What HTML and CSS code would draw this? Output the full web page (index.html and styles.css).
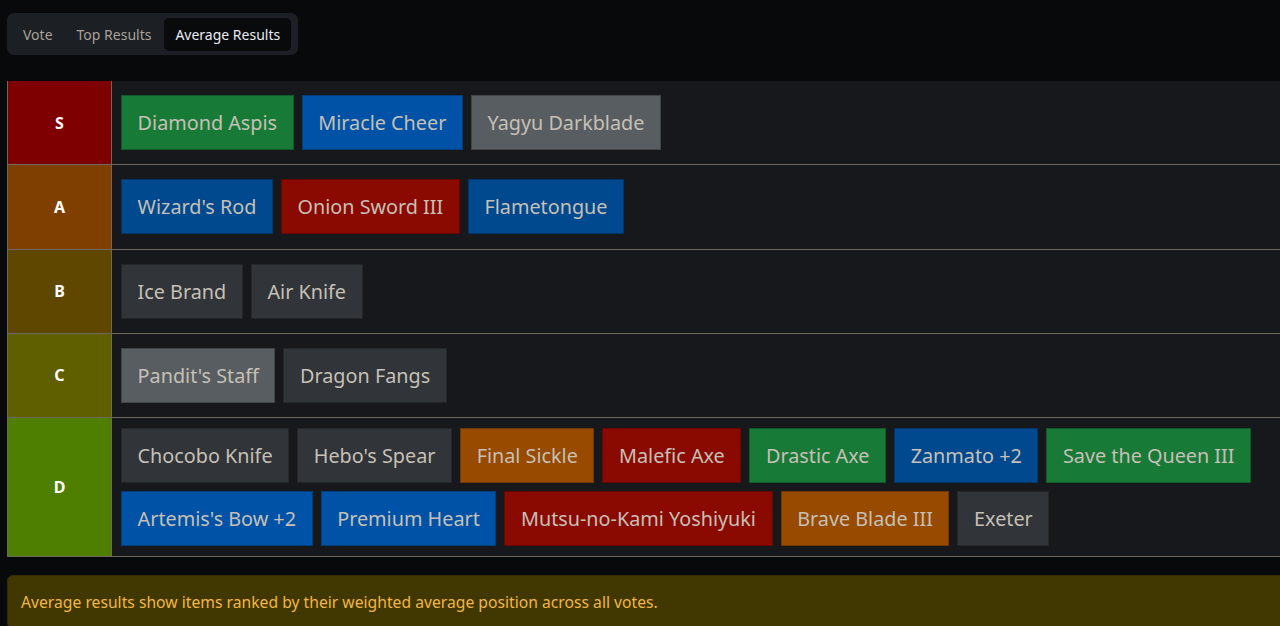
FILE: index.html
```html
<!DOCTYPE html>
<html lang="en">
<head>
    <meta charset="UTF-8">
    <meta name="viewport" content="width=device-width, initial-scale=1.0">
    <title>Tier List Results</title>
    <link rel="stylesheet" href="styles.css">
</head>
<body>
    <div class="tabs">
        <button class="tab">Vote</button>
        <button class="tab">Top Results</button>
        <button class="tab active">Average Results</button>
    </div>

    <div class="tier-list">
        <div class="tier">
            <div class="tier-label tier-s">S</div>
            <div class="tier-items">
                <div class="item green">Diamond Aspis</div>
                <div class="item blue">Miracle Cheer</div>
                <div class="item gray">Yagyu Darkblade</div>
            </div>
        </div>
        <div class="tier">
            <div class="tier-label tier-a">A</div>
            <div class="tier-items">
                <div class="item navy">Wizard's Rod</div>
                <div class="item red">Onion Sword III</div>
                <div class="item navy">Flametongue</div>
            </div>
        </div>
        <div class="tier">
            <div class="tier-label tier-b">B</div>
            <div class="tier-items">
                <div class="item dark">Ice Brand</div>
                <div class="item dark">Air Knife</div>
            </div>
        </div>
        <div class="tier">
            <div class="tier-label tier-c">C</div>
            <div class="tier-items">
                <div class="item gray">Pandit's Staff</div>
                <div class="item dark">Dragon Fangs</div>
            </div>
        </div>
        <div class="tier">
            <div class="tier-label tier-d">D</div>
            <div class="tier-items">
                <div class="item dark">Chocobo Knife</div>
                <div class="item dark">Hebo's Spear</div>
                <div class="item orange">Final Sickle</div>
                <div class="item red">Malefic Axe</div>
                <div class="item green">Drastic Axe</div>
                <div class="item navy">Zanmato +2</div>
                <div class="item green">Save the Queen III</div>
                <div class="item blue">Artemis's Bow +2</div>
                <div class="item blue">Premium Heart</div>
                <div class="item red">Mutsu-no-Kami Yoshiyuki</div>
                <div class="item orange">Brave Blade III</div>
                <div class="item dark">Exeter</div>
            </div>
        </div>
    </div>

    <div class="notice">
        Average results show items ranked by their weighted average position across all votes.
    </div>
</body>
</html>
```

FILE: styles.css
```css
body {
    font-family: "Noto Sans", "Open Sans", sans-serif;
    background-color: #08090b;
    color: #c9c3b9;
    margin: 0;
    padding: 13px 0 0 7px;
    overflow: hidden;
}
.tabs {
    display: inline-flex;
    gap: 2px;
    padding: 5px 7px 4px 5px;
    background-color: #1c1f24;
    border-radius: 7px;
}
.tab {
    font-family: inherit;
    font-size: 14px;
    height: 33px;
    padding: 0 11px;
    border: none;
    border-radius: 5px;
    background: none;
    color: #a8a29a;
    cursor: pointer;
}
.tab.active {
    background-color: #090a0c;
    color: #e8ecf2;
}
.tier-list {
    margin-top: 26px;
    margin-right: -20px;
    background-color: #16181b;
    border-left: 1px solid #6e675c;
}
.tier {
    display: grid;
    grid-template-columns: 104px 1fr;
    border-bottom: 1px solid #6e675c;
}
.tier-label {
    display: flex;
    align-items: center;
    justify-content: center;
    font-size: 16px;
    font-weight: bold;
    color: #ffffff;
    border-right: 1px solid #6e675c;
}
.tier-s { background-color: #7f0000; }
.tier-a { background-color: #7f3f00; }
.tier-b { background-color: #5f4700; }
.tier-c { background-color: #5f5f00; }
.tier-d { background-color: #4f7f00; }
.tier-items {
    display: flex;
    flex-wrap: wrap;
    align-content: center;
    gap: 8px 8px;
    min-height: 63.25px;
    padding: 10px 8px 10px 9px;
}
.item {
    font-size: 19.8px;
    line-height: 53px;
    padding: 0 15.6px;
    border: 1px solid rgba(0, 0, 0, 0.25);
    color: #c6c0b6;
}
.green { background-color: #187a37; }
.blue { background-color: #0052a6; }
.navy { background-color: #00498e; }
.red { background-color: #8a0a02; }
.orange { background-color: #974a00; }
.gray { background-color: #575d61; }
.dark { background-color: #313438; }
.notice {
    margin-top: 18px;
    margin-right: -20px;
    padding: 15px 13px;
    background-color: #403800;
    border: 1px solid #332c00;
    border-radius: 6px;
    color: #f3b54a;
    font-size: 15.7px;
}
```
